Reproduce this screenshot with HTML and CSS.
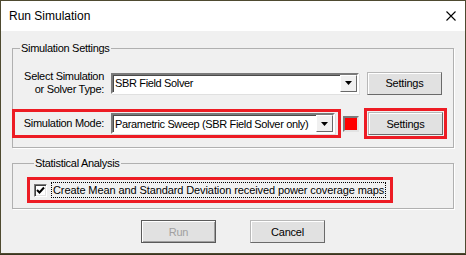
FILE: index.html
```html
<!DOCTYPE html>
<html lang="en">
<head>
  <meta charset="UTF-8" />
  <title>Run Simulation</title>
  <link rel="stylesheet" href="styles.css">
</head>
<body>

  <div class="window">
    <div class="titlebar">
      <span class="title">Run Simulation</span>
      <svg class="close" width="10" height="10" viewBox="0 0 10 10">
        <path d="M0.5 0.5 L9.5 9.5 M9.5 0.5 L0.5 9.5" stroke="#000" stroke-width="1.1" fill="none" />
      </svg>
    </div>

    <div class="dialog">
      <fieldset class="group group-settings">
        <legend>Simulation Settings</legend>

        <div class="row row-solver">
          <label class="field-label">Select Simulation<br>or Solver Type:</label>
          <div class="combo combo-solver">
            <span class="combo-text">SBR Field Solver</span>
            <span class="combo-btn">
              <svg width="7" height="4" viewBox="0 0 7 4"><path d="M0 0 H7 L3.5 4 Z" fill="#000" /></svg>
            </span>
          </div>
          <button class="btn">Settings</button>
        </div>

        <div class="row row-mode">
          <div class="mark mark-mode">
            <label class="field-label">Simulation Mode:</label>
            <div class="combo combo-mode">
              <span class="combo-text">Parametric Sweep (SBR Field Solver only)</span>
              <span class="combo-btn">
                <svg width="7" height="4" viewBox="0 0 7 4"><path d="M0 0 H7 L3.5 4 Z" fill="#000" /></svg>
              </span>
            </div>
          </div>
          <span class="swatch"></span>
          <div class="mark mark-btn">
            <button class="btn">Settings</button>
          </div>
        </div>
      </fieldset>

      <fieldset class="group group-stats">
        <legend>Statistical Analysis</legend>
        <div class="mark mark-check">
          <span class="check">
            <svg width="9" height="9" viewBox="0 0 9 9"><path d="M1 4 L3.5 6.5 L8 1.5" stroke="#000" stroke-width="2" fill="none" /></svg>
          </span>
          <span class="focus">Create Mean and Standard Deviation received power coverage maps</span>
        </div>
      </fieldset>

      <div class="actions">
        <button class="btn btn-default" disabled>Run</button>
        <button class="btn">Cancel</button>
      </div>
    </div>
  </div>

</body>
</html>
```

FILE: styles.css
```css
body {
  margin: 0;
  background: #3a3520;
  font-family: 'Liberation Sans', Arial, sans-serif;
  font-size: 11px;
  letter-spacing: -0.2px;
  color: #000;
}

.window {
  width: 466px;
  height: 254px;
  box-sizing: border-box;
  border: 1px solid #4e4a30;
  background: #f0f0f0;
  display: flex;
  flex-direction: column;
}

/* ---------- TITLE BAR ---------- */
.titlebar {
  height: 30px;
  background: #fff;
  display: flex;
  align-items: center;
  justify-content: space-between;
  padding: 0 9px 0 8px;
}

.title {
  font-size: 12px;
  letter-spacing: 0;
}

/* ---------- DIALOG ---------- */
.dialog {
  padding: 9px 11px 0 11px;
}

.group {
  margin: 0;
  padding: 0;
  border: 1px solid #b0b0b0;
  box-shadow: 1px 1px 0 #fff;
}

.group legend {
  margin-left: 7px;
  padding: 0 2px 0 1px;
  line-height: 16px;
  letter-spacing: -0.3px;
}

.group-settings {
  padding: 14px 0 8px 0;
}

.group-stats {
  margin-top: 7px;
  padding: 6px 0 5px 14px;
}

.row {
  display: flex;
  align-items: center;
}

.row-mode {
  margin-top: 12px;
}

.field-label {
  width: 91px;
  margin-right: 7px;
  text-align: right;
  line-height: 13px;
  letter-spacing: -0.3px;
}

.mark-mode .field-label {
  width: 89px;
}

/* ---------- COMBO BOX ---------- */
.combo {
  height: 21px;
  box-sizing: border-box;
  background: #fff;
  border: 2px solid;
  border-color: #7a7a7a #fff #fff #7a7a7a;
  box-shadow: inset 1px 1px 0 #4a4a4a, 1px 1px 0 #e0e0e0;
  display: flex;
  align-items: center;
  justify-content: space-between;
  padding-left: 2px;
}

.combo-text {
  letter-spacing: -0.35px;
}

.combo-solver {
  width: 248px;
}

.combo-mode {
  width: 224px;
}

.combo-btn {
  width: 17px;
  height: 17px;
  box-sizing: border-box;
  background: #f0f0f0;
  border: 1px solid;
  border-color: #fff #696969 #696969 #fff;
  display: flex;
  align-items: center;
  justify-content: center;
}

/* ---------- BUTTONS ---------- */
.btn {
  width: 75px;
  height: 23px;
  box-sizing: border-box;
  background: #e1e1e1;
  border: 1px solid;
  border-color: #b8b8b8 #6a6a6a #6a6a6a #b8b8b8;
  box-shadow: inset 1px 1px 0 #fff;
  font-family: inherit;
  font-size: 11px;
  letter-spacing: -0.2px;
  color: #000;
  padding: 0;
}

.row-solver .btn {
  margin-left: 8px;
}

.btn-default {
  border: 1px solid #5a5a5a;
  box-shadow: inset 1px 1px 0 #fff, inset -1px -1px 0 #a0a0a0;
  color: #a0a0a0;
}

/* ---------- HIGHLIGHT MARKS ---------- */
.mark {
  border: 3px solid #ed1c24;
  display: flex;
  align-items: center;
}

.mark-mode {
  margin-left: -1px;
  height: 23px;
  padding-right: 3px;
}

.mark-btn {
  margin-left: 5px;
  padding: 1px;
}

.swatch {
  width: 16px;
  height: 16px;
  box-sizing: border-box;
  margin-left: 2px;
  background: #ff0000;
  border: 2px solid;
  border-color: #7a7a7a #e3e3e3 #e3e3e3 #7a7a7a;
}

.mark-check {
  display: inline-flex;
  padding: 2px 4px 2px 4px;
}

.check {
  width: 13px;
  height: 13px;
  box-sizing: border-box;
  background: #fff;
  border: 1px solid;
  border-color: #7a7a7a #fff #fff #7a7a7a;
  box-shadow: inset 1px 1px 0 #404040, inset -1px -1px 0 #e3e3e3;
  display: flex;
  align-items: center;
  justify-content: center;
  margin-right: 4px;
}

.focus {
  border: 1px dotted #000;
  line-height: 14px;
  padding: 0 1px;
  letter-spacing: -0.1px;
}

/* ---------- ACTIONS ---------- */
.actions {
  display: flex;
  justify-content: center;
  gap: 34px;
  margin-top: 11px;
}
```
